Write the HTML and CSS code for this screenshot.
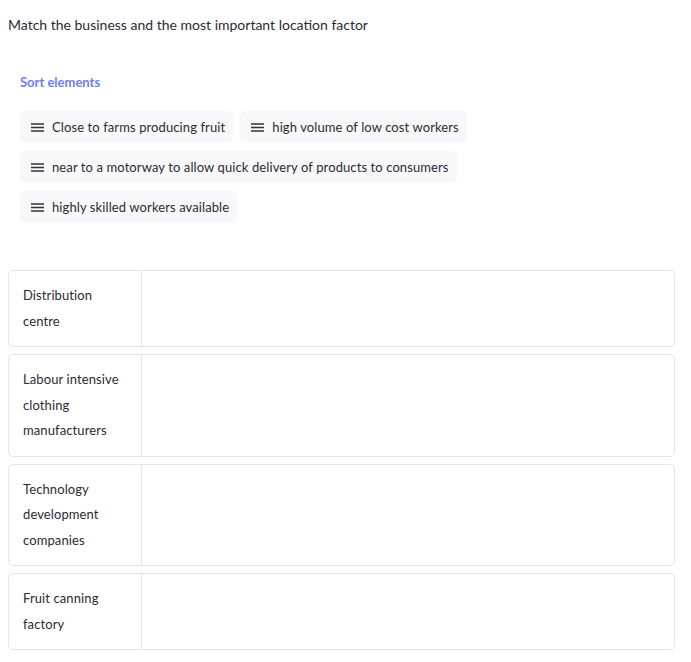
FILE: index.html
```html
<!DOCTYPE html>
<html>
<head>
<meta charset="utf-8">
<link rel="stylesheet" href="styles.css">
</head>
<body>
<div class="page">
  <p class="title">Match the business and the most important location factor</p>
  <div class="sort">
    <div class="sort-label">Sort elements</div>
    <div class="chips">
      <div class="chip"><svg class="ico" viewBox="0 0 13 9" width="13" height="9"><path d="M0 1H13M0 4.5H13M0 8H13" stroke="#333" stroke-width="1.3"/></svg><span>Close to farms producing fruit</span></div>
      <div class="chip"><svg class="ico" viewBox="0 0 13 9" width="13" height="9"><path d="M0 1H13M0 4.5H13M0 8H13" stroke="#333" stroke-width="1.3"/></svg><span>high volume of low cost workers</span></div>
      <div class="chip"><svg class="ico" viewBox="0 0 13 9" width="13" height="9"><path d="M0 1H13M0 4.5H13M0 8H13" stroke="#333" stroke-width="1.3"/></svg><span>near to a motorway to allow quick delivery of products to consumers</span></div>
      <div class="chip"><svg class="ico" viewBox="0 0 13 9" width="13" height="9"><path d="M0 1H13M0 4.5H13M0 8H13" stroke="#333" stroke-width="1.3"/></svg><span>highly skilled workers available</span></div>
    </div>
  </div>
  <div class="rows">
    <div class="row"><div class="label">Distribution centre</div><div class="drop"></div></div>
    <div class="row"><div class="label">Labour intensive clothing manufacturers</div><div class="drop"></div></div>
    <div class="row"><div class="label">Technology development companies</div><div class="drop"></div></div>
    <div class="row"><div class="label">Fruit canning factory</div><div class="drop"></div></div>
  </div>
</div>
</body>
</html>
```
FILE: styles.css
```css
html, body { margin: 0; padding: 0; background: #fff; }
body { font-family: Lato, "Liberation Sans", sans-serif; color: #2b2b36; }
.page { padding: 8px 16px 8px 8px; }
.title { margin: 7px 0 0; font-size: 14px; line-height: 20px; }
.sort { padding: 37px 12px 0; }
.sort-label { font-size: 13px; font-weight: 700; color: #6f7df8; line-height: 20px; letter-spacing: 0; }
.chips { display: flex; flex-wrap: wrap; gap: 8px 7px; margin-top: 19px; width: 470px; }
.chip { display: flex; align-items: center; height: 32px; padding: 0 8px 0 11px; background: #f8f8fa; border-radius: 5px; font-size: 13px; letter-spacing: 0.1px; box-sizing: border-box; }
.ico { margin-right: 8px; flex: none; }
.rows { margin-top: 47px; display: flex; flex-direction: column; gap: 7px; }
.row { display: flex; border: 1px solid #e3e5ea; border-radius: 5px; }
.label { width: 133px; box-sizing: border-box; padding: 12px 20px 12px 14px; font-size: 13px; line-height: 25.5px; letter-spacing: 0.1px; border-right: 1px solid #e3e5ea; }
.drop { flex: 1; }
```
